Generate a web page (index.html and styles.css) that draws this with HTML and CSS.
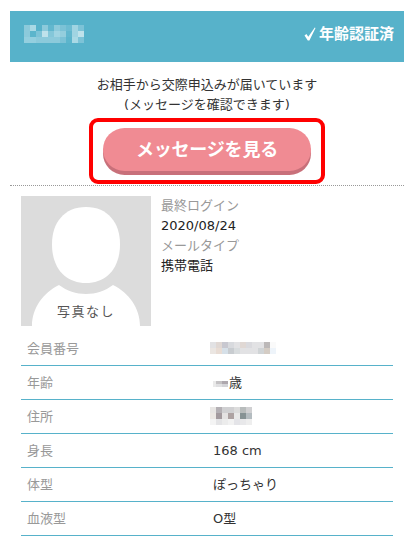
FILE: index.html
```html
<!DOCTYPE html>
<html lang="ja">
<head>
  <meta charset="UTF-8" />
  <meta name="viewport" content="width=device-width, initial-scale=1" />
  <title>プロフィール</title>
  <link rel="stylesheet" href="styles.css">
</head>
<body>

  <div class="head">
    <svg class="mosaic" width="60" height="18" viewBox="0 0 10 3" shape-rendering="crispEdges">
      <rect width="10" height="3" fill="#8ccadb"/>
      <rect x="1" width="1" height="1" fill="#a9d9e5"/>
      <rect x="2" width="1" height="1" fill="#57b2ca"/>
      <rect x="4" width="1" height="1" fill="#62b7ce"/>
      <rect x="6" width="1" height="1" fill="#7cc2d6"/>
      <rect x="7" width="1" height="1" fill="#6dbcd2"/>
      <rect x="8" width="1" height="1" fill="#a0d4e2"/>
      <rect x="9" width="1" height="1" fill="#7dc3d7"/>
      <rect x="1" y="1" width="1" height="1" fill="#5cb5cc"/>
      <rect x="2" y="1" width="1" height="1" fill="#7dc3d7"/>
      <rect x="3" y="1" width="1" height="1" fill="#bfe2eb"/>
      <rect x="4" y="1" width="1" height="1" fill="#84c7d9"/>
      <rect x="5" y="1" width="1" height="1" fill="#a0d4e2"/>
      <rect x="6" y="1" width="1" height="1" fill="#94cedd"/>
      <rect x="7" y="1" width="1" height="1" fill="#62b7ce"/>
      <rect x="8" y="1" width="1" height="1" fill="#a0d4e2"/>
      <rect x="9" y="1" width="1" height="1" fill="#bfe2eb"/>
      <rect y="2" width="1" height="1" fill="#94cfdf"/>
      <rect x="1" y="2" width="1" height="1" fill="#94cfdf"/>
      <rect x="6" y="2" width="1" height="1" fill="#7cc2d6"/>
      <rect x="7" y="2" width="1" height="1" fill="#5cb5cc"/>
      <rect x="8" y="2" width="1" height="1" fill="#a9d9e5"/>
      <rect x="9" y="2" width="1" height="1" fill="#7dc3d7"/>
    </svg>
    <span class="verified">
      <svg class="check" width="12" height="14" viewBox="0 0 12 14"><path d="M0.5 8.5L2.4 7L4.3 9.8L10.8 0.5L11.5 1L5.4 13.5H3.8Z" fill="#fff"/></svg>
      年齢認証済
    </span>
  </div>

  <div class="notice">
    <p>お相手から交際申込みが届いています<br>(メッセージを確認できます)</p>
    <div class="btn-frame">
      <a class="btn" href="#">メッセージを見る</a>
    </div>
  </div>

  <div class="profile">
    <div class="summary">
      <div class="photo">
        <svg width="130" height="130" viewBox="0 0 130 130">
          <rect width="130" height="130" fill="#dcdcdc"/>
          <path d="M65 11C87 11 99 27 99 48C99 73 85 87 65 87C45 87 31 73 31 48C31 27 43 11 65 11Z" fill="#fff"/>
          <path d="M38 89C46 95 55 98 65 98C75 98 84 95 92 89C108 97 119 112 119 130H11C11 112 22 97 38 89Z" fill="#fff"/>
        </svg>
        <span class="photo-label">写真なし</span>
      </div>
      <div class="login">
        <p class="sub">最終ログイン</p>
        <p>2020/08/24</p>
        <p class="sub">メールタイプ</p>
        <p>携帯電話</p>
      </div>
    </div>

    <table class="info">
      <tr>
        <th>会員番号</th>
        <td>
          <svg class="mosaic" width="66" height="12" viewBox="0 0 11 2" shape-rendering="crispEdges">
            <rect width="11" height="2" fill="#e2e2e4"/>
            <rect x="1" width="1" height="1" fill="#e0d8d4"/>
            <rect x="2" width="1" height="1" fill="#c8c8d0"/>
            <rect x="3" width="1" height="1" fill="#d8dade"/>
            <rect x="5" width="1" height="1" fill="#e0d8d4"/>
            <rect x="6" width="1" height="1" fill="#dadade"/>
            <rect x="9" width="1" height="1" fill="#bcb8b8"/>
            <rect x="10" width="1" height="1" fill="#fafafa"/>
            <rect y="1" width="1" height="1" fill="#ebe6e2"/>
            <rect x="1" y="1" width="1" height="1" fill="#e8dcd4"/>
            <rect x="2" y="1" width="1" height="1" fill="#d6e0e8"/>
            <rect x="3" y="1" width="1" height="1" fill="#c8ccd0"/>
            <rect x="4" y="1" width="1" height="1" fill="#d8dcde"/>
            <rect x="8" y="1" width="1" height="1" fill="#d0d4d6"/>
            <rect x="9" y="1" width="1" height="1" fill="#d4ccc4"/>
            <rect x="10" y="1" width="1" height="1" fill="#eef4fa"/>
          </svg>
        </td>
      </tr>
      <tr>
        <th>年齢</th>
        <td>
          <span class="age">
            <svg class="mosaic" width="15" height="12" viewBox="0 0 5 2" shape-rendering="crispEdges">
              <rect width="1" height="2" fill="#eaeaea"/>
              <rect x="1" width="2" height="1" fill="#c4c2c4"/>
              <rect x="3" width="2" height="1" fill="#aea8ae"/>
              <rect x="1" y="1" width="2" height="1" fill="#e0e0e2"/>
              <rect x="3" y="1" width="2" height="1" fill="#d4d4d8"/>
            </svg>歳
          </span>
        </td>
      </tr>
      <tr>
        <th>住所</th>
        <td>
          <svg class="mosaic" width="42" height="18" viewBox="0 0 7 3" shape-rendering="crispEdges">
            <rect width="7" height="3" fill="#d0d0d2"/>
            <rect width="1" height="1" fill="#e8e6e4"/>
            <rect x="1" width="1" height="1" fill="#b4b0b4"/>
            <rect x="4" width="1" height="1" fill="#dcdcdc"/>
            <rect x="5" width="1" height="1" fill="#b8bcbc"/>
            <rect y="1" width="1" height="1" fill="#ece8e4"/>
            <rect x="1" y="1" width="1" height="1" fill="#a39a9e"/>
            <rect x="2" y="1" width="1" height="1" fill="#e4e2e2"/>
            <rect x="3" y="1" width="1" height="1" fill="#ada2a2"/>
            <rect x="4" y="1" width="1" height="1" fill="#e8e8e8"/>
            <rect x="5" y="1" width="1" height="1" fill="#869294"/>
            <rect x="6" y="1" width="1" height="1" fill="#b4bcc0"/>
            <rect y="2" width="1" height="1" fill="#f4f4f4"/>
            <rect x="1" y="2" width="1" height="1" fill="#e4e4e6"/>
            <rect x="2" y="2" width="1" height="1" fill="#ececec"/>
            <rect x="3" y="2" width="1" height="1" fill="#f2f2f2"/>
            <rect x="4" y="2" width="1" height="1" fill="#e4e4e8"/>
            <rect x="5" y="2" width="1" height="1" fill="#e8e8ea"/>
            <rect x="6" y="2" width="1" height="1" fill="#eeeeee"/>
          </svg>
        </td>
      </tr>
      <tr>
        <th>身長</th>
        <td>168 cm</td>
      </tr>
      <tr>
        <th>体型</th>
        <td>ぽっちゃり</td>
      </tr>
      <tr>
        <th>血液型</th>
        <td>O型</td>
      </tr>
    </table>
  </div>

</body>
</html>
```

FILE: styles.css
```css
body {
  font-family: 'DejaVu Sans', 'Noto Sans CJK JP', sans-serif;
  font-size: 13px;
  line-height: 20px;
  background: #fff;
  margin: 0;
  padding: 11px 9px 0 10px;
  color: #333;
}
p {
  margin: 0;
}
.mosaic {
  display: block;
}
.head {
  display: flex;
  align-items: center;
  justify-content: space-between;
  height: 51px;
  background: #57b2ca;
  padding: 0 10px 0 14px;
  box-sizing: border-box;
}
.head .mosaic {
  margin-bottom: 6px;
}
.verified {
  display: flex;
  align-items: center;
  margin-bottom: 6px;
  color: #fff;
  font-size: 15px;
  font-weight: bold;
}
.check {
  margin-right: 3px;
}
.notice {
  display: flex;
  flex-direction: column;
  align-items: center;
  padding: 13px 0 0;
  border-bottom: 1px dotted #999;
  text-align: center;
}
.btn-frame {
  width: 236px;
  height: 66px;
  margin: 3px 0 1px;
  padding: 6px 10px 0;
  box-sizing: border-box;
  border: 4px solid #f00;
  border-radius: 9px;
}
.btn {
  display: block;
  height: 43px;
  line-height: 43px;
  background: #f08b93;
  border-radius: 24px;
  box-shadow: 0 4px 0 #c8707a;
  color: #fff;
  font-size: 18px;
  font-weight: bold;
  letter-spacing: -.2px;
  text-decoration: none;
}
.profile {
  padding: 10px 11px 0;
}
.summary {
  display: flex;
  gap: 10px;
}
.photo {
  position: relative;
  width: 130px;
  height: 130px;
}
.photo svg {
  display: block;
}
.photo-label {
  position: absolute;
  left: 0;
  right: 0;
  bottom: 4px;
  text-align: center;
  letter-spacing: 1.5px;
  color: #555;
}
.login {
  color: #222;
}
.sub {
  color: #999;
}
.info {
  width: 372px;
  margin-top: 5px;
  border-collapse: collapse;
}
.info tr {
  height: 34px;
  border-bottom: 1px solid #57b2ca;
}
.info th {
  width: 192px;
  padding: 2px 0 0 6px;
  box-sizing: border-box;
  font-weight: normal;
  text-align: left;
  color: #999;
}
.info td {
  padding: 2px 0 0;
}
.info td .mosaic {
  margin: -2px 0 0 -3px;
}
.age {
  display: flex;
  align-items: center;
}
.info td .age .mosaic {
  margin: 2px 1px 0 0;
}
```
